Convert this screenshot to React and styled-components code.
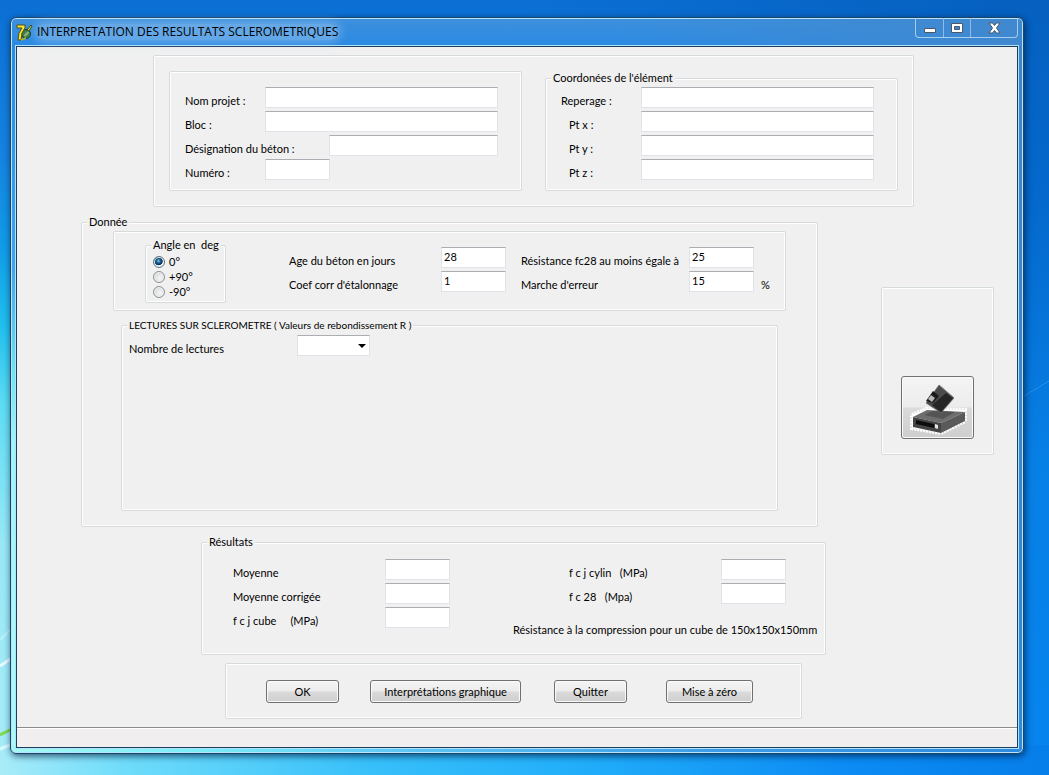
import React, { useState } from "react";
import styled, { createGlobalStyle } from "styled-components";

const GlobalStyle = createGlobalStyle`
  * {
    box-sizing: border-box;
  }

  body {
    margin: 0;
    font-family: Lato, "Liberation Sans", sans-serif;
    font-size: 11px;
    line-height: 16px;
    color: #000;
  }

  input, select, button {
    font: inherit;
    color: inherit;
  }
`;

const Desktop = styled.div`
  position: relative;
  min-height: 100vh;
  padding: 17px 25px 21px 10px;
  background:
    linear-gradient(to right, #a8ecf8 0, #6edcfa 12%, #38c0fa 35%, #22aefa 55%, #0c8cf4 80%, #067eea 100%) bottom / 100% 30px no-repeat,
    linear-gradient(to right, transparent 50%, #0560c0 96%) top / 100% 24px no-repeat,
    linear-gradient(#0560c0, #0468cc 25%, #0780e6 60%, #0684ee) right / 40px 100% no-repeat,
    linear-gradient(#0b6fd4, #1583e0 20%, #109ce8 32%, #20c0ee 42%, #5cdcf4 52%, #98e8f6 70%, #a8ecf8);
`;

const Streaks = styled.svg`
  position: absolute;
  inset: 0;
  width: 100%;
  height: 100%;
`;

const Window = styled.main`
  position: relative;
  padding: 0 5px 5px;
  border: 1px solid #17466e;
  border-radius: 6px;
  background:
    linear-gradient(to right, transparent 60%, #4088cf 100%) top / 100% 30px no-repeat,
    linear-gradient(to right, #a5f8f4, #7ceef8 18%, #5cc4f4 40%, #3c9be8 70%, #2c8be0) bottom / 100% 8px no-repeat,
    linear-gradient(#4286cb, #3a86d0 50%, #2c8be0) right / 8px 100% no-repeat,
    linear-gradient(#3d90dc, #2a8ae4 4%, #40a4ee 34%, #6ce4f0 48%, #9cf8f4 58%, #a8fcf6 85%);
  box-shadow:
    inset 0 0 0 1px #b8e4fa,
    1px 2px 7px rgba(0, 20, 50, 0.7);
`;

const TitleBar = styled.header`
  display: flex;
  align-items: center;
  gap: 4px;
  height: 28px;

  & h1 {
    flex: none;
    margin: 0;
    border-radius: 8px;
    background: rgba(160, 200, 240, 0.45);
    box-shadow: 0 0 8px 3px rgba(160, 200, 240, 0.45);
    font: 12px/16px "Open Sans", sans-serif;
  }
`;

const Caption = styled.div`
  display: flex;
  align-self: flex-start;
  margin-left: auto;
  border: 1px solid #a5cdf0;
  border-top: 0;
  border-radius: 0 0 4px 4px;
`;

const CaptionButton = styled.button`
  display: flex;
  align-items: center;
  justify-content: center;
  width: ${({ $wide }) => ($wide ? "47px" : "27px")};
  height: 19px;
  padding: 0;
  border: 0;
  background: none;

  & + & {
    border-left: 1px solid #8fbce6;
  }
`;

const Client = styled.div`
  border: 1px solid #1d3f5e;
  background: #f0f0f0;
  box-shadow: 0 0 0 1px #b0e2fa;
`;

const Content = styled.form`
  display: flex;
  flex-direction: column;
  padding: 8px 23px 8px 64px;
`;

const Group = styled.fieldset`
  min-width: 0;
  margin: 0;
  padding: 0;
  border: 1px solid #d5dadd;
  border-radius: 2px;
  box-shadow: inset 0 0 0 1px #fff;
`;

const Legend = styled.legend`
  margin-left: 5px;
  padding: 0 2px;
  background: #f0f0f0;
  font-size: ${({ $small }) => ($small ? "10px" : "11px")};
  white-space: pre;
`;

const Header = styled(Group)`
  margin: 0 80px 7px 72px;
`;

const HeaderColumns = styled.div`
  display: flex;
  gap: 23px;
  padding: 14px 15px 15px;

  & > fieldset {
    flex: 1;
  }

  & > fieldset:first-child {
    margin-top: 1px;
  }
`;

const HeaderFields = styled.div`
  padding: ${({ $top }) => $top}px 23px 7px 15px;
`;

const Row = styled.div`
  display: flex;
  height: 24px;
`;

const Label = styled.label`
  flex: none;
  width: ${({ $width }) => $width}px;
  padding: 6px 0 0 ${({ $indent }) => $indent || 0}px;
  white-space: pre;
`;

const TextBox = styled.input`
  flex: ${({ $fill }) => ($fill ? "1" : "none")};
  width: 65px;
  min-width: 0;
  height: 21px;
  padding: 0 2px 3px;
  border: 1px solid #e2e3ea;
  border-top-color: #abadb3;
  background: #fff;
`;

const Middle = styled.div`
  display: flex;
  align-items: flex-start;
  gap: 63px;
  margin-bottom: 7px;

  & > fieldset:first-child {
    flex: 1;
  }
`;

const DataBody = styled.div`
  padding: 1px 31px 15px;
`;

const Params = styled.div`
  display: flex;
  align-items: flex-start;
  gap: 63px;
  padding: 5px 15px 7px 31px;
`;

const Angles = styled(Group)`
  width: 81px;
`;

const AngleList = styled.div`
  padding: 1px 7px 3px;
`;

const AngleOption = styled.label`
  display: flex;
  align-items: center;
  gap: 4px;
  height: 15px;
`;

const Radio = styled.input`
  appearance: none;
  width: 12px;
  height: 12px;
  margin: 0;
  border: 1px solid #8e8f8f;
  border-radius: 50%;
  background: radial-gradient(circle at 60% 60%, #f6f6f6, #c8ccd0);
  box-shadow: inset 0 0 0 1px #f4f4f4;

  &:checked {
    border-color: #5c7488;
    background: radial-gradient(circle at 45% 40%, #7fd0f0 0, #1a6090 25%, #0b2c50 48%, #e4eef4 56%);
  }
`;

const ParamFields = styled.div`
  display: flex;
  gap: 15px;
  padding-top: 10px;
`;

const Unit = styled.span`
  padding: 6px 0 0 7px;
`;

const Readings = styled(Group)`
  margin: 6px 8px 0;
`;

const ReadingsBody = styled.div`
  min-height: 177px;
  padding: 2px 7px;
`;

const SelectWrap = styled.div`
  position: relative;
  width: 73px;
  height: 21px;

  &::after {
    content: "";
    position: absolute;
    top: 9px;
    right: 4px;
    border: 4px solid transparent;
    border-top-color: #000;
    border-bottom: 0;
    pointer-events: none;
  }
`;

const Select = styled.select`
  appearance: none;
  width: 100%;
  height: 100%;
  padding: 0 16px 0 3px;
  border: 1px solid #e2e3ea;
  border-top-color: #abadb3;
  border-radius: 0;
  background: #fff;
`;

const Side = styled(Group)`
  flex: none;
  width: 113px;
  margin-top: 73px;
`;

const SideBody = styled.div`
  display: flex;
  align-items: flex-end;
  justify-content: center;
  height: 166px;
  padding-bottom: 15px;
`;

const PushButton = styled.button`
  width: ${({ $width }) => $width || 73}px;
  height: 23px;
  padding: 0;
  border: 1px solid #707070;
  border-radius: 3px;
  background: linear-gradient(#f4f4f4, #ececec 48%, #dadada 52%, #cecece);
  box-shadow: inset 0 0 0 1px #fafafa;
`;

const SaveButton = styled(PushButton)`
  height: 63px;

  & svg {
    display: block;
  }
`;

const Results = styled(Group)`
  margin: 0 168px 8px 120px;
`;

const ResultsBody = styled.div`
  display: flex;
  gap: 63px;
  padding: 9px 8px 16px 31px;
`;

const ResultColumn = styled.div`
  flex: none;
`;

const Indented = styled.div`
  padding-left: 56px;
`;

const Note = styled.p`
  margin: 15px 0 0;
  white-space: nowrap;
`;

const Actions = styled(Group)`
  margin: 0 192px 0 144px;
`;

const ActionGrid = styled.div`
  display: grid;
  grid-template-columns: 104px 184px 112px auto;
  padding: 16px 40px 15px;
`;

const StatusBar = styled.footer`
  height: 20px;
  border-top: 1px solid #8c8c8c;
  background: #f0eeee;
  box-shadow: inset 0 1px 0 #fff;
`;

function Field({ id, label, width, indent, fill, value = "", children }) {
  const [text, setText] = useState(value);

  return (
    <Row>
      <Label htmlFor={id} $width={width} $indent={indent}>
        {label}
      </Label>
      <TextBox
        id={id}
        type="text"
        $fill={fill}
        value={text}
        onChange={(e) => setText(e.target.value)}
      />
      {children}
    </Row>
  );
}

function AppIcon() {
  return (
    <svg width="17" height="17" viewBox="0 0 17 17" aria-hidden="true">
      <circle cx="10" cy="10" r="4.5" fill="#3f7d4a" stroke="#16351c" />
      <path d="M8 11l4-4 1 2-4 4z" fill="#8cb67c" />
      <path d="M1 1h8v3L6 9l-1 7H2l1-7 3-5H1z" fill="#f4e63a" stroke="#57500c" />
      <path d="M11 6l4-5 1 1-3 5z" fill="#d9dc3c" stroke="#35480f" />
      <path d="M5 16l5-2" stroke="#b8b428" strokeWidth="1.5" />
    </svg>
  );
}

function DiskIcon() {
  return (
    <svg width="71" height="61" viewBox="0 0 71 61" aria-hidden="true">
      <path
        d="M10 38l14-6 39 1v11L39 56 10 51z"
        fill="#fff"
        stroke="#fff"
        strokeWidth="4"
        strokeDasharray="2 1"
      />
      <path d="M11 40l14-7 38 2-24 11z" fill="#6e6e6e" />
      <path d="M22 38l9-4 22 1-12 7z" fill="#545454" />
      <path d="M11 40l28 6v10l-28-6z" fill="#454545" />
      <path d="M39 46l24-11v9L39 56z" fill="#5a5a5a" />
      <path d="M14 43l18 4v4l-18-4z" fill="#0c0c0c" />
      <path d="M33 47l3 1v4l-3-1z" fill="#e4e4e4" />
      <path d="M24 26L37 8l15 13-13 15z" fill="#4c4c4c" />
      <path d="M37 8l15 13" stroke="#868686" />
      <path d="M24 26L37 8l15 13-13 15z" fill="none" stroke="#6c6c6c" strokeWidth="0.6" />
      <path d="M30 28l14-12 7 5-12 14z" fill="#262626" />
      <path d="M24 24l7-10 6 5-6 7z" fill="#1c1c1c" />
      <path d="M26 22l3-4 4 3-3 4z" fill="#b8b8b8" />
    </svg>
  );
}

export default function App() {
  const [angle, setAngle] = useState("0°");

  return (
    <>
      <GlobalStyle />
      <Desktop>
        <Streaks viewBox="0 0 1049 775" preserveAspectRatio="none" aria-hidden="true">
          <path d="M0 640L12 628" stroke="#b8f2fa" strokeWidth="2" />
          <path d="M0 666L12 658" stroke="#e8fcff" strokeWidth="3" />
          <path d="M0 735L12 729" stroke="#7fdc4a" strokeWidth="3" />
          <path d="M0 749L12 744" stroke="#d4fbff" strokeWidth="3" />
          <path d="M1024 396L1049 381" stroke="#2a8eec" strokeWidth="1" />
        </Streaks>
        <Window>
          <TitleBar>
            <AppIcon />
            <h1>INTERPRETATION DES RESULTATS SCLEROMETRIQUES</h1>
            <Caption>
              <CaptionButton type="button" aria-label="Réduire">
                <svg width="12" height="12">
                  <path d="M.5 6.5h11v4H.5z" fill="#fff" stroke="#4a5868" />
                </svg>
              </CaptionButton>
              <CaptionButton type="button" aria-label="Agrandir">
                <svg width="12" height="12">
                  <path
                    d="M.5 1.5h11v9H.5zM3.500 4.500v3h5v-3z"
                    fill="#fff"
                    fillRule="evenodd"
                    stroke="#4a5868"
                  />
                </svg>
              </CaptionButton>
              <CaptionButton type="button" $wide aria-label="Fermer">
                <svg width="13" height="12">
                  <path
                    d="M1 1h3.500l2 2.500 2-2.500H12L8.500 6l3.500 5H8.500l-2-2.500-2 2.500H1l3.500-5z"
                    fill="#fff"
                    stroke="#4a5868"
                  />
                </svg>
              </CaptionButton>
            </Caption>
          </TitleBar>

          <Client>
            <Content onSubmit={(e) => e.preventDefault()}>
              <Header>
                <HeaderColumns>
                  <Group>
                    <HeaderFields $top={15}>
                      <Field id="projet" label="Nom projet :" width={80} fill />
                      <Field id="bloc" label="Bloc :" width={80} fill />
                      <Field id="beton" label="Désignation du béton :" width={144} fill />
                      <Field id="numero" label="Numéro :" width={80} />
                    </HeaderFields>
                  </Group>
                  <Group>
                    <Legend>Coordonées de l'élément</Legend>
                    <HeaderFields $top={1}>
                      <Field id="reperage" label="Reperage :" width={80} fill />
                      <Field id="ptx" label="Pt x :" width={80} indent={8} fill />
                      <Field id="pty" label="Pt y :" width={80} indent={8} fill />
                      <Field id="ptz" label="Pt z :" width={80} indent={8} fill />
                    </HeaderFields>
                  </Group>
                </HeaderColumns>
              </Header>

              <Middle>
                <Group>
                  <Legend>Donnée</Legend>
                  <DataBody>
                    <Group>
                      <Params>
                        <Angles>
                          <Legend>Angle en  deg</Legend>
                          <AngleList>
                            {["0°", "+90°", "-90°"].map((value) => (
                              <AngleOption key={value}>
                                <Radio
                                  type="radio"
                                  name="angle"
                                  value={value}
                                  checked={angle === value}
                                  onChange={() => setAngle(value)}
                                />
                                {value}
                              </AngleOption>
                            ))}
                          </AngleList>
                        </Angles>
                        <ParamFields>
                          <div>
                            <Field id="age" label="Age du béton en jours" width={152} value="28" />
                            <Field id="coef" label="Coef corr d'étalonnage" width={152} value="1" />
                          </div>
                          <div>
                            <Field
                              id="resistance"
                              label="Résistance fc28 au moins égale à"
                              width={168}
                              value="25"
                            />
                            <Field id="erreur" label="Marche d'erreur" width={168} value="15">
                              <Unit>%</Unit>
                            </Field>
                          </div>
                        </ParamFields>
                      </Params>
                    </Group>
                    <Readings>
                      <Legend $small>
                        LECTURES SUR SCLEROMETRE ( Valeurs de rebondissement R )
                      </Legend>
                      <ReadingsBody>
                        <Row>
                          <Label htmlFor="lectures" $width={168}>
                            Nombre de lectures
                          </Label>
                          <SelectWrap>
                            <Select id="lectures" defaultValue="">
                              <option value=""></option>
                            </Select>
                          </SelectWrap>
                        </Row>
                      </ReadingsBody>
                    </Readings>
                  </DataBody>
                </Group>
                <Side>
                  <SideBody>
                    <SaveButton type="button" aria-label="Enregistrer">
                      <DiskIcon />
                    </SaveButton>
                  </SideBody>
                </Side>
              </Middle>

              <Results>
                <Legend>Résultats</Legend>
                <ResultsBody>
                  <ResultColumn>
                    <Field id="moyenne" label="Moyenne" width={152} />
                    <Field id="corrigee" label="Moyenne corrigée" width={152} />
                    <Field id="cube" label="f c j cube     (MPa)" width={152} />
                  </ResultColumn>
                  <ResultColumn>
                    <Indented>
                      <Field id="cylin" label="f c j cylin   (MPa)" width={152} />
                      <Field id="fc28" label="f c 28   (Mpa)" width={152} />
                    </Indented>
                    <Note>Résistance à la compression pour un cube de 150x150x150mm</Note>
                  </ResultColumn>
                </ResultsBody>
              </Results>

              <Actions>
                <ActionGrid>
                  <PushButton type="submit">OK</PushButton>
                  <PushButton type="button" $width={151}>
                    Interprétations graphique
                  </PushButton>
                  <PushButton type="button">Quitter</PushButton>
                  <PushButton type="reset" $width={87}>
                    Mise à zéro
                  </PushButton>
                </ActionGrid>
              </Actions>
            </Content>
            <StatusBar />
          </Client>
        </Window>
      </Desktop>
    </>
  );
}
